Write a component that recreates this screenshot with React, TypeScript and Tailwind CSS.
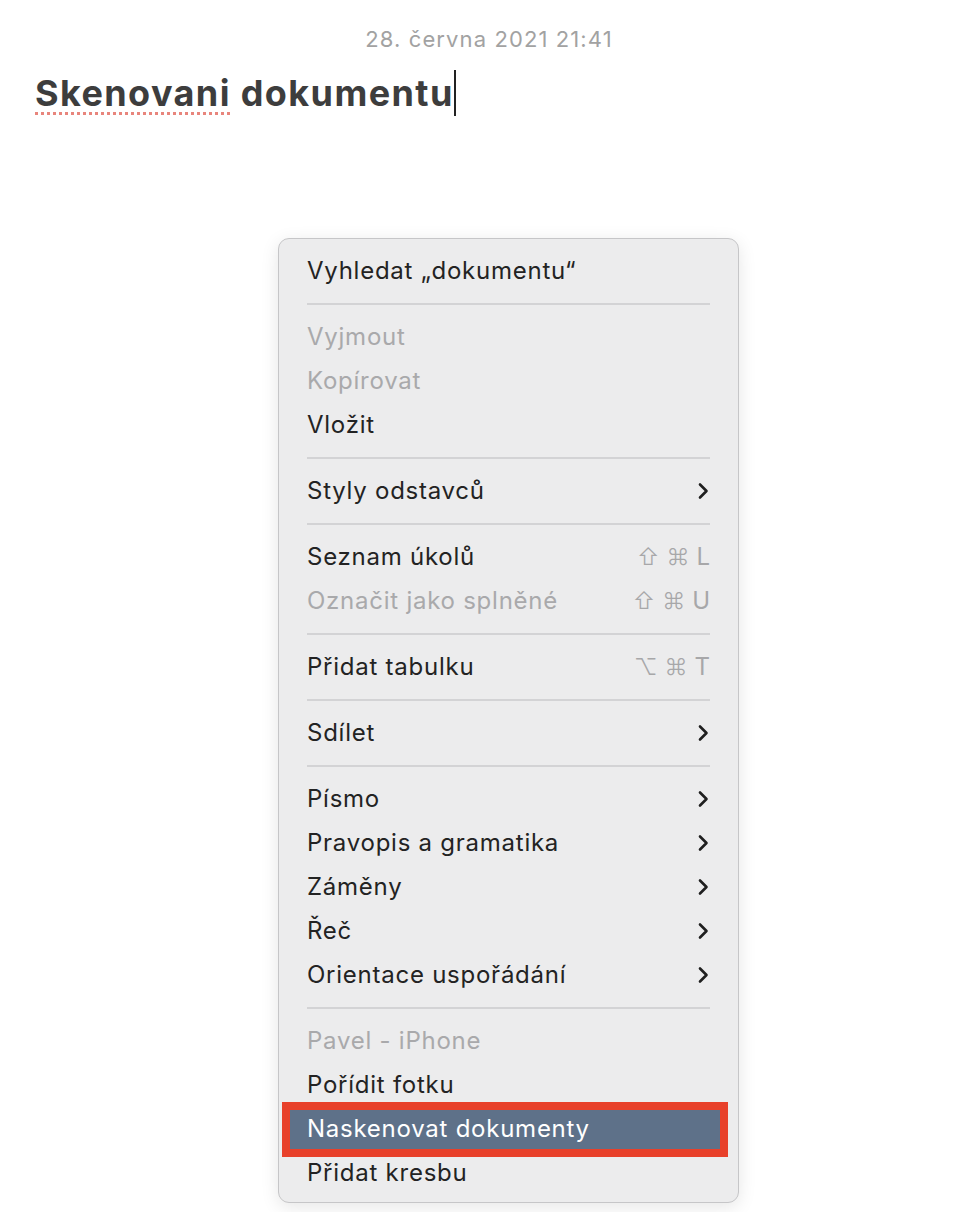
import React from "react";

type Item =
  | { type: "sep" }
  | { type: "item"; label: string; disabled?: boolean; sub?: boolean; keys?: string[]; highlight?: boolean };

const items: Item[] = [
  { type: "item", label: "Vyhledat „dokumentu“" },
  { type: "sep" },
  { type: "item", label: "Vyjmout", disabled: true },
  { type: "item", label: "Kopírovat", disabled: true },
  { type: "item", label: "Vložit" },
  { type: "sep" },
  { type: "item", label: "Styly odstavců", sub: true },
  { type: "sep" },
  { type: "item", label: "Seznam úkolů", keys: ["⇧", "⌘", "L"] },
  { type: "item", label: "Označit jako splněné", disabled: true, keys: ["⇧", "⌘", "U"] },
  { type: "sep" },
  { type: "item", label: "Přidat tabulku", keys: ["⌥", "⌘", "T"] },
  { type: "sep" },
  { type: "item", label: "Sdílet", sub: true },
  { type: "sep" },
  { type: "item", label: "Písmo", sub: true },
  { type: "item", label: "Pravopis a gramatika", sub: true },
  { type: "item", label: "Záměny", sub: true },
  { type: "item", label: "Řeč", sub: true },
  { type: "item", label: "Orientace uspořádání", sub: true },
  { type: "sep" },
  { type: "item", label: "Pavel - iPhone", disabled: true },
  { type: "item", label: "Pořídit fotku" },
  { type: "item", label: "Naskenovat dokumenty", highlight: true },
  { type: "item", label: "Přidat kresbu" },
];

function Chevron() {
  return (
    <svg width="14" height="18" viewBox="0 0 14 18" className="block">
      <path d="M4 2.5 L10.5 9 L4 15.5" fill="none" stroke="#1f1f1f" strokeWidth="2.6" strokeLinecap="round" strokeLinejoin="round" />
    </svg>
  );
}

export default function App() {
  return (
    <div className="w-[978px] h-[1212px] bg-white overflow-hidden font-['Inter','DejaVu_Sans',sans-serif]">
      <div className="pt-[27px] h-[70px] text-center text-[22px] leading-[24px] text-[#a2a2a2] tracking-[1.1px]">
        28. června 2021 21:41
      </div>
      <div className="pl-[35px] h-[46px] flex items-center text-[36px] leading-[46px] font-bold text-[#3d3d3d] tracking-[1.4px]">
        <span className="underline decoration-dotted decoration-[#e8857c] decoration-[3px] underline-offset-[6px]">Skenovani</span>
        <span>&nbsp;dokumentu</span>
        <span className="inline-block w-[2px] h-[46px] bg-[#222]"></span>
      </div>
      <div className="ml-[278px] mt-[122px] w-[461px] rounded-[11px] border border-[#c6c6c8] bg-[#ececed] pt-[10px] pb-[7px] shadow-[0_4px_18px_rgba(0,0,0,0.10)]">
        {items.map((it, i) => {
          if (it.type === "sep") {
            return (
              <div key={i} className="h-[22px] flex items-center px-[28px]">
                <div className="h-[2px] w-full bg-[#d3d3d5]"></div>
              </div>
            );
          }
          if (it.highlight) {
            return (
              <div key={i} className="relative h-[44px]">
                <div className="absolute left-[7px] right-[12px] top-0 bottom-0 bg-[#5e7189]"></div>
                <div className="relative h-full flex items-center px-[28px] text-[24px] text-white tracking-[0.75px]">
                  {it.label}
                </div>
                <div className="absolute left-[3px] top-[-5px] w-[446px] h-[55px] border-[8px] border-[#e8402a]"></div>
              </div>
            );
          }
          return (
            <div
              key={i}
              className={
                "h-[44px] flex items-center justify-between px-[28px] text-[24px] tracking-[0.75px] " +
                (it.disabled ? "text-[#a9a9ab]" : "text-[#232323]")
              }
            >
              <span>{it.label}</span>
              {it.sub && <Chevron />}
              {it.keys && (
                <span className="flex items-center gap-[7px] text-[23px] tracking-normal text-[#a7a7a9] font-['DejaVu_Sans','Inter',sans-serif] font-light">
                  {it.keys.map((k, j) => (
                    <span key={j} className={j === 2 ? "font-['Inter'] font-normal text-[24px]" : ""}>{k}</span>
                  ))}
                </span>
              )}
            </div>
          );
        })}
      </div>
    </div>
  );
}
